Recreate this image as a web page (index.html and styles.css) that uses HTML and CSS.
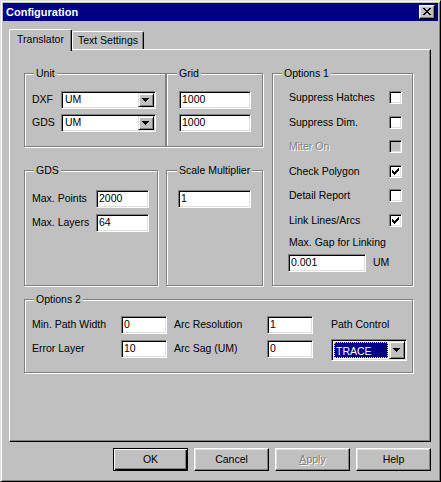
FILE: index.html
```html
<!DOCTYPE html>
<html>
<head>
<meta charset="utf-8">
<title>Configuration</title>
<link rel="stylesheet" href="styles.css">
</head>
<body>
<div class="window">
  <div class="titlebar">
    <span class="title">Configuration</span>
    <div class="close"><svg width="8" height="7" viewBox="0 0 8 7" shape-rendering="crispEdges"><path fill="#000" d="M0 0h2v1H0zM6 0h2v1H6zM1 1h2v1H1zM5 1h2v1H5zM2 2h4v1H2zM3 3h2v1H3zM2 4h4v1H2zM1 5h2v1H1zM5 5h2v1H5zM0 6h2v1H0zM6 6h2v1H6z"/></svg></div>
  </div>
  <div class="body">
    <div class="tabs">
      <div class="tab active">Translator</div>
      <div class="tab">Text Settings</div>
    </div>
    <div class="panel">
      <div class="top">
        <div class="leftcol">
          <div class="rowa">
            <div class="group g-unit">
              <div class="legend">Unit</div>
              <div class="rows unit-rows">
                <div class="frow">
                  <span class="flabel w29">DXF</span>
                  <div class="combo w95"><span class="combo-text">UM</span><span class="dd"><svg width="7" height="4" viewBox="0 0 7 4" shape-rendering="crispEdges"><path fill="#000" d="M0 0h7v1H0zM1 1h5v1H1zM2 2h3v1H2zM3 3h1v1H3z"/></svg></span></div>
                </div>
                <div class="frow">
                  <span class="flabel w29">GDS</span>
                  <div class="combo w95"><span class="combo-text">UM</span><span class="dd"><svg width="7" height="4" viewBox="0 0 7 4" shape-rendering="crispEdges"><path fill="#000" d="M0 0h7v1H0zM1 1h5v1H1zM2 2h3v1H2zM3 3h1v1H3z"/></svg></span></div>
                </div>
              </div>
            </div>
            <div class="group g-grid">
              <div class="legend">Grid</div>
              <div class="rows grid-rows">
                <div class="frow"><div class="field w72">1000</div></div>
                <div class="frow"><div class="field w72">1000</div></div>
              </div>
            </div>
          </div>
          <div class="rowb">
            <div class="group g-gds">
              <div class="legend">GDS</div>
              <div class="rows gds-rows">
                <div class="frow"><span class="flabel w64">Max. Points</span><div class="field w53">2000</div></div>
                <div class="frow"><span class="flabel w64">Max. Layers</span><div class="field w53">64</div></div>
              </div>
            </div>
            <div class="group g-scale">
              <div class="legend">Scale Multiplier</div>
              <div class="rows scale-rows">
                <div class="frow"><div class="field w73">1</div></div>
              </div>
            </div>
          </div>
        </div>
        <div class="group g-opt1">
          <div class="legend">Options 1</div>
          <div class="opt1-body">
            <div class="checks">
              <div class="cbrow"><span class="cblabel">Suppress Hatches</span><span class="cb"></span></div>
              <div class="cbrow"><span class="cblabel">Suppress Dim.</span><span class="cb"></span></div>
              <div class="cbrow"><span class="cblabel disabled">Miter On</span><span class="cb cb-disabled"></span></div>
              <div class="cbrow"><span class="cblabel">Check Polygon</span><span class="cb"><svg width="7" height="7" viewBox="0 0 7 7" shape-rendering="crispEdges"><path fill="#000" d="M0 2h1v3H0zM1 3h1v3H1zM2 4h1v3H2zM3 3h1v3H3zM4 2h1v3H4zM5 1h1v3H5zM6 0h1v3H6z"/></svg></span></div>
              <div class="cbrow"><span class="cblabel">Detail Report</span><span class="cb"></span></div>
              <div class="cbrow"><span class="cblabel">Link Lines/Arcs</span><span class="cb"><svg width="7" height="7" viewBox="0 0 7 7" shape-rendering="crispEdges"><path fill="#000" d="M0 2h1v3H0zM1 3h1v3H1zM2 4h1v3H2zM3 3h1v3H3zM4 2h1v3H4zM5 1h1v3H5zM6 0h1v3H6z"/></svg></span></div>
            </div>
            <div class="gaplabel">Max. Gap for Linking</div>
            <div class="frow gaprow"><div class="field w78">0.001</div><span class="unit">UM</span></div>
          </div>
        </div>
      </div>
      <div class="group g-opt2">
        <div class="legend">Options 2</div>
        <div class="rows opt2-rows">
          <div class="frow">
            <span class="flabel w89">Min. Path Width</span>
            <div class="field w46">0</div>
            <span class="flabel w93 ml7">Arc Resolution</span>
            <div class="field w46">1</div>
            <span class="flabel ml18">Path Control</span>
          </div>
          <div class="frow">
            <span class="flabel w89">Error Layer</span>
            <div class="field w46">10</div>
            <span class="flabel w93 ml7">Arc Sag (UM)</span>
            <div class="field w46">0</div>
            <div class="combo pathcombo"><span class="sel">TRACE</span><span class="dd dd-big"><svg width="7" height="4" viewBox="0 0 7 4" shape-rendering="crispEdges"><path fill="#000" d="M0 0h7v1H0zM1 1h5v1H1zM2 2h3v1H2zM3 3h1v1H3z"/></svg></span></div>
          </div>
        </div>
      </div>
    </div>
    <div class="buttons">
      <div class="btn default">OK</div>
      <div class="btn">Cancel</div>
      <div class="btn disabled"><span><u>A</u>pply</span></div>
      <div class="btn">Help</div>
    </div>
  </div>
</div>
</body>
</html>
```

FILE: styles.css
```css
* { box-sizing: border-box; }
html, body { margin: 0; padding: 0; }
body {
  background: #c0c0c0;
  font-family: "Liberation Sans", Arial, sans-serif;
  font-size: 10.5px;
  color: #000;
}
.window {
  width: 441px;
  height: 482px;
  background: #c0c0c0;
  border: 1px solid;
  border-color: #dfdfdf #000 #000 #dfdfdf;
  box-shadow: inset 1px 1px #fff, inset -1px -1px #808080;
  padding: 2px;
}
.titlebar {
  height: 18px;
  background: #000080;
  display: flex;
  align-items: center;
  justify-content: space-between;
  padding: 0 3px 0 3px;
}
.title {
  color: #fff;
  font-weight: bold;
  font-size: 11px;
  line-height: 18px;
}
.close {
  width: 16px;
  height: 14px;
  background: #c0c0c0;
  border: 1px solid;
  border-color: #fff #000 #000 #fff;
  box-shadow: inset -1px -1px #808080, inset 1px 1px #dfdfdf;
  display: flex;
  align-items: center;
  justify-content: center;
  padding: 0 1px 1px 0;
}
.close svg { display: block; }
.body {
  padding: 8px 7px 0 6px;
}
.tabs {
  display: flex;
  align-items: flex-end;
  height: 20px;
}
.tab {
  height: 18px;
  line-height: 16px;
  text-align: center;
  background: #c0c0c0;
  border-top: 1px solid #fff;
  border-left: 1px solid #fff;
  border-right: 1px solid #000;
  box-shadow: inset -1px 0 #808080;
  border-radius: 2px 2px 0 0;
  width: 72px;
}
.tab.active {
  width: 63px;
  height: 22px;
  line-height: 19px;
  margin-bottom: -2px;
  position: relative;
  z-index: 1;
}
.panel {
  height: 393px;
  border: 1px solid;
  border-color: #fff #000 #000 #fff;
  box-shadow: inset -1px -1px #808080;
  padding: 23px 0 0 14px;
}
.top {
  display: flex;
  gap: 9px;
}
.leftcol { width: 239px; }
.rowa { display: flex; }
.rowb { display: flex; gap: 8px; margin-top: 23px; }
.group {
  border: 1px solid #808080;
  box-shadow: 1px 1px 0 #fff, inset 1px 1px 0 #fff;
}
.legend {
  width: fit-content;
  margin: -7px 0 -6px 9px;
  padding: 0 2px;
  background: #c0c0c0;
  line-height: 13px;
  height: 13px;
}
.g-unit { width: 142px; height: 74px; }
.g-grid { width: 97px; height: 74px; }
.g-grid .legend { margin-left: 10px; }
.g-gds { width: 134px; height: 116px; }
.g-scale { width: 97px; height: 116px; }
.g-scale .legend { margin-left: 10px; }
.g-opt1 { width: 141px; height: 213px; }
.g-opt2 { width: 389px; height: 74px; margin-top: 13px; }

.rows { display: flex; flex-direction: column; }
.unit-rows { padding: 17px 0 0 7px; gap: 5px; }
.grid-rows { padding: 17px 0 0 12px; gap: 5px; }
.gds-rows { padding: 19px 0 0 7px; gap: 6px; }
.scale-rows { padding: 19px 0 0 11px; }
.opt2-rows { padding: 16px 0 0 7px; gap: 6px; }

.frow { display: flex; align-items: baseline; }
.flabel { line-height: 13px; white-space: nowrap; }
.w29 { width: 29px; }
.w64 { width: 64px; }
.w89 { width: 89px; }
.w93 { width: 93px; }
.w46 { width: 46px; }
.w53 { width: 53px; }
.w72 { width: 72px; }
.w73 { width: 73px; }
.w78 { width: 78px; }
.w95 { width: 95px; }
.ml7 { margin-left: 7px; }
.ml18 { margin-left: 18px; }

.field {
  height: 18px;
  background: #fff;
  border: 1px solid;
  border-color: #808080 #fff #fff #808080;
  box-shadow: inset 1px 1px #000, inset -1px -1px #dfdfdf;
  padding: 1px 2px 0 2px;
  line-height: 12px;
  white-space: nowrap;
}
.combo {
  height: 18px;
  background: #fff;
  border: 1px solid;
  border-color: #808080 #fff #fff #808080;
  box-shadow: inset 1px 1px #000, inset -1px -1px #dfdfdf;
  padding: 1px;
  display: flex;
}
.combo-text {
  flex: 1;
  line-height: 12px;
  padding-left: 2px;
}
.dd {
  width: 16px;
  height: 14px;
  background: #c0c0c0;
  border: 1px solid;
  border-color: #dfdfdf #000 #000 #dfdfdf;
  box-shadow: inset 1px 1px #fff, inset -1px -1px #808080;
  display: flex;
  align-items: center;
  justify-content: center;
  padding: 0 1px 0 0;
}
.dd svg { display: block; }
.pathcombo {
  width: 76px;
  height: 22px;
  margin-left: 18px;
  align-self: flex-start;
  margin-top: -1px;
}
.sel {
  flex: 1;
  background: #000080;
  color: #fff;
  border: 1px dotted #ffff00;
  line-height: 16px;
  padding-left: 1px;
  margin: 1px;
}
.dd-big { height: 18px; }

.opt1-body { padding: 17px 0 0 16px; }
.cbrow {
  display: flex;
  align-items: flex-start;
  height: 24.6px;
}
.cbrow:last-child { height: 13px; }
.cblabel {
  width: 100px;
  line-height: 13px;
  white-space: nowrap;
}
.disabled {
  color: #808080;
  text-shadow: 1px 1px 0 #fff;
}
.cb {
  width: 13px;
  height: 13px;
  background: #fff;
  border: 1px solid;
  border-color: #808080 #fff #fff #808080;
  box-shadow: inset 1px 1px #000, inset -1px -1px #dfdfdf;
  padding: 2px;
}
.cb svg { display: block; }
.cb-disabled { background: #c0c0c0; }
.gaplabel {
  margin-top: 9px;
  line-height: 13px;
}
.gaprow { margin-top: 5px; margin-left: -1px; }
.unit { margin-left: 7px; line-height: 13px; }

.buttons {
  display: flex;
  justify-content: flex-end;
  gap: 6px;
  margin-top: 6px;
}
.btn {
  width: 75px;
  height: 23px;
  border: 1px solid;
  border-color: #fff #000 #000 #fff;
  box-shadow: inset -1px -1px #808080, inset 1px 1px #dfdfdf;
  display: flex;
  align-items: center;
  justify-content: center;
  line-height: 13px;
}
.btn.default {
  border: 1px solid #000;
  box-shadow: inset 1px 1px #fff, inset -1px -1px #000, inset -2px -2px #808080;
}
.btn.disabled u { text-decoration: underline; }
```
